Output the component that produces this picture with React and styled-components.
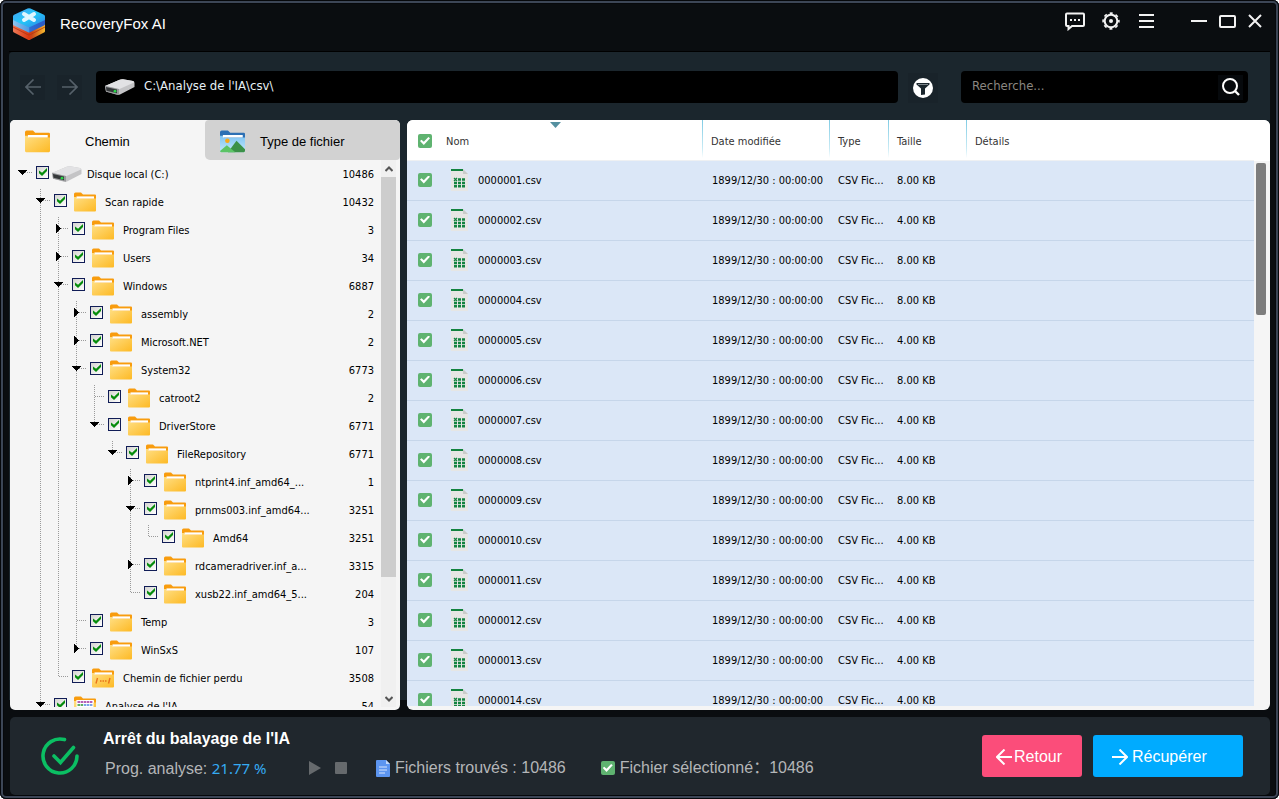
import React from 'react';
import styled, { createGlobalStyle } from "styled-components";

const GlobalStyle = createGlobalStyle`
    * { box-sizing: border-box; }
    body { margin: 0; background: #fff; }
    button, input { font: inherit; margin: 0; }
    svg { display: block; flex: none; }
`;

const ui = `"DejaVu Sans Condensed", "Noto Sans", sans-serif`;
const arial = `"Liberation Sans", Arial, "Noto Sans CJK SC", sans-serif`;

const Window = styled.div`
    display: flex;
    flex-direction: column;
    height: 100vh;
    min-height: 480px;
    padding: 4px 9px;
    border-radius: 6px;
    background: #0a0d10;
    box-shadow: inset 0 0 0 1px #06080b, inset 0 0 0 3px #3c4656, inset 0 0 0 4px #06080b;
    font-family: ${ui};
    font-size: 11px;
    line-height: 16px;
    color: #000;
    overflow: hidden;
`;

/* title bar */

const TitleBar = styled.header`
    display: flex;
    flex: none;
    height: 48px;
    padding: 3px 1px 0 4px;
    border-bottom: 1px solid #000;
`;

const Brand = styled.div`
    display: flex;
    align-items: center;
    flex: 1;
    height: 34px;
`;

const AppName = styled.h1`
    margin: 0 0 0 15px;
    font: 400 15px/20px ${arial};
    color: #fff;
`;

const BarButton = styled.button`
    display: flex;
    align-items: center;
    justify-content: center;
    width: ${(props) => (props.$wide ? "36px" : "28px")};
    height: 28px;
    padding: 0;
    border: 0;
    background: none;
    color: #f2f2f2;
`;

const WindowButtons = styled.div`
    display: flex;
    margin-left: 20px;
`;

/* toolbar */

const Body = styled.main`
    display: flex;
    flex-direction: column;
    flex: 1;
    min-height: 0;
    padding-left: 1px;
    border-radius: 4px 0 0 0;
    background: linear-gradient(#1b262d, #1b262d) no-repeat;
    background-size: 100% calc(100% - 10px);
`;

const Toolbar = styled.div`
    display: flex;
    align-items: center;
    flex: none;
    height: 68px;
    padding: 2px 22px 0 10px;
`;

const NavButtons = styled.div`
    display: flex;
    gap: 12px;
    margin-right: 14px;
`;

const NavButton = styled.button`
    display: flex;
    align-items: center;
    justify-content: center;
    width: 25px;
    height: 25px;
    padding: 0;
    border: 0;
    background: #19232a;
    color: #56616a;
`;

const Field = styled.label`
    display: flex;
    align-items: center;
    gap: 9px;
    flex: ${(props) => (props.$width ? "none" : "1")};
    width: ${(props) => props.$width || "auto"};
    height: 32px;
    padding: 0 5px 0 ${(props) => (props.$width ? "11px" : "9px")};
    border-radius: 4px;
    background: #000;
`;

const TextInput = styled.input`
    flex: 1;
    min-width: 0;
    padding: 0 0 2px;
    border: 0;
    outline: none;
    background: none;
    font: 400 13px/20px ${ui};
    color: #e6f0f6;

    &::placeholder { color: #8b8781; opacity: 1; }
`;

const FilterButton = styled(BarButton)`
    width: 30px;
    height: 30px;
    margin: 2px 23px 0 10px;
    background: #19232a;
`;

const SearchButton = styled(BarButton)`
    width: 25px;
    height: 25px;
    background: #06090c;
`;

const Panels = styled.div`
    display: flex;
    gap: 7px;
    flex: 1;
    min-height: 0;
`;

/* left panel */

const SidePanel = styled.section`
    display: flex;
    flex-direction: column;
    flex: none;
    width: 390px;
    padding-bottom: 3px;
    border-radius: 5px;
    background: #f5f5f5;
    overflow: hidden;
`;

const Tabs = styled.div`
    display: grid;
    grid-template-columns: 1fr 1fr;
    flex: none;
    height: 40px;
`;

const Tab = styled.button`
    display: flex;
    align-items: center;
    gap: ${(props) => (props.$active ? "35px" : "15px")};
    padding: 3px 0 0 15px;
    border: 0;
    border-radius: ${(props) => (props.$active ? "0" : "4px 4px 4px 5px")};
    background: ${(props) => (props.$active ? "#f5f5f5" : "#d2d2d2")};
    font: 400 13px/20px ${arial};
    color: #000;
`;

const TreeArea = styled.div`
    display: flex;
    flex: 1;
    min-height: 0;
    padding-right: 4px;
    overflow: hidden;
`;

const Tree = styled.ul`
    flex: 1;
    margin: 0;
    padding: 0 7px 0 8px;
    list-style: none;
`;

const TreeRow = styled.li`
    display: flex;
    align-items: center;
    height: 28px;
`;

const TreeLabel = styled.label`
    display: flex;
    align-items: center;
    flex: 1;
`;

const Text = styled.span`
    padding-top: 2px;
`;

const TreeIcon = styled.span`
    display: flex;
    justify-content: center;
    width: 30px;
    margin: 0 5px 0 3px;
`;

const TreeCheck = styled.input`
    appearance: none;
    display: block;
    width: 13px;
    height: 13px;
    margin-bottom: 3px;
    border: 1px solid #101c56;
    background: linear-gradient(135deg, #d4d4d0, #fff);

    &:checked::after {
        content: "";
        display: block;
        width: 8px;
        height: 8px;
        margin: 1px 2px;
        background: #068c0c;
        clip-path: polygon(0 30%, 38% 60%, 100% 0, 100% 38%, 38% 100%, 0 66%);
    }
`;

const Scrollbar = styled.div`
    display: flex;
    flex-direction: column;
    flex: none;
    align-items: center;
    justify-content: space-between;
    width: 15px;
    background: #f0f0f0;
`;

const ScrollButton = styled.button`
    display: flex;
    align-items: center;
    justify-content: center;
    width: 15px;
    height: 17px;
    padding: 0;
    border: 0;
    background: none;
    color: #555;
`;

const TreeTrack = styled.div`
    flex: 1;
    width: 15px;
`;

const TreeThumb = styled.div`
    height: 78%;
    background: #cdcdcd;
`;

/* file list */

const FilePanel = styled.section`
    display: flex;
    flex: 1;
    min-width: 0;
    padding-bottom: 4px;
    border-radius: 6px;
    background: #f5f5f5;
    overflow: hidden;
`;

const FileArea = styled.div`
    flex: 1;
    min-width: 0;
    overflow: hidden;
`;

const FileTable = styled.table`
    width: 100%;
    table-layout: fixed;
    border-collapse: separate;
    border-spacing: 0;
`;

const Col = styled.col`
    width: ${(props) => props.$w || "auto"};
`;

const Th = styled.th`
    height: 41px;
    padding: ${(props) => (props.$icon ? "2px" : "4px")} 0 0 ${(props) => props.$pad || "9px"};
    border-bottom: 1px solid #eef0f2;
    background: ${(props) => (props.$line
        ? "linear-gradient(#7fcbe4, #c9ebf5 75%, #fff) no-repeat 0 0 / 1px 38px, #fff"
        : "#fff")};
    text-align: left;
    font-weight: 400;
    color: #333;
`;

const SortMark = styled.svg`
    position: absolute;
    top: 122px;
    left: 550px;
`;

const Td = styled.td`
    height: 40px;
    padding: 0 0 ${(props) => (props.$icon ? "2px" : "0")} ${(props) => props.$pad || "9px"};
    border-bottom: 1px solid #c6d6ea;
    background: #dbe7f7;
    white-space: nowrap;
`;

const FileName = styled.span`
    display: flex;
    align-items: center;
    gap: 10px;
`;

const GreenCheck = styled.input`
    appearance: none;
    display: block;
    flex: none;
    width: 14px;
    height: 14px;
    border-radius: 2px;
    background: #5fb370;

    &:checked::after {
        content: "";
        display: block;
        width: 10px;
        height: 8px;
        margin: 3px 2px;
        background: #fff;
        clip-path: polygon(0 50%, 15% 34%, 38% 60%, 84% 0, 100% 16%, 38% 100%);
    }
`;

const FileScroll = styled.div`
    width: 16px;
    padding: 43px 4px 0 2px;
    background: linear-gradient(#fff, #fff) no-repeat 0 0 / 100% 41px;
`;

const FileThumb = styled.div`
    height: 28%;
    border-radius: 2px;
    background: #7d7d7d;
`;

/* status bar */

const StatusBar = styled.footer`
    display: flex;
    align-items: center;
    flex: none;
    height: 78px;
    margin: 7px 0 0 1px;
    padding: 0 27px 0 31px;
    border-radius: 5px;
    background: #20272d;
    font: 400 16px/20px ${arial};
    color: #b4b6b8;
`;

const StatusText = styled.div`
    flex: 1;
    margin: 0 0 5px 24px;
`;

const StatusTitle = styled.h2`
    margin: 0 0 9px;
    font: 700 16px/20px ${arial};
    color: #fff;
`;

const StatusLine = styled.div`
    display: flex;
    align-items: center;
    padding-left: 2px;
    white-space: nowrap;
`;

const Progress = styled.span`
    width: 204px;
`;

const Percent = styled.span`
    font: 400 15px/20px "Noto Sans", sans-serif;
    color: #35abf3;
`;

const RoundButton = styled.button`
    display: flex;
    width: 12px;
    height: 14px;
    margin-right: 14px;
    padding: 0;
    border: 0;
    background: none;
    color: #666a6d;
`;

const Stat = styled.label`
    display: flex;
    align-items: center;
    gap: 5px;
    margin-left: ${(props) => props.$space || "0"};
`;

const ActionButton = styled.button`
    display: flex;
    align-items: center;
    gap: ${(props) => (props.$wide ? "4px" : "2px")};
    width: ${(props) => (props.$wide ? "150px" : "100px")};
    height: 42px;
    margin-left: 11px;
    padding: 2px 0 0 ${(props) => (props.$wide ? "19px" : "14px")};
    border: 0;
    border-radius: 3px;
    background: ${(props) => props.color};
    color: #fff;
`;

/* drawings */

function Logo() {
  return (
    <svg width="32" height="32" viewBox="0 0 32 32" aria-hidden="true">
        <defs>
            <linearGradient id="top" x1="0" y1="0" x2="1" y2="1">
                <stop offset="0" stopColor="#4a9df2" /><stop offset=".5" stopColor="#22c8f8" /><stop offset="1" stopColor="#2f7fe6" />
            </linearGradient>
            <linearGradient id="mid" x1="0" y1="0" x2="1" y2="0">
                <stop offset="0" stopColor="#8cc4ee" /><stop offset=".5" stopColor="#4c9ae4" /><stop offset=".52" stopColor="#2f6fd6" /><stop offset="1" stopColor="#2a58c4" />
            </linearGradient>
            <linearGradient id="low" x1="0" y1="0" x2="1" y2="0">
                <stop offset="0" stopColor="#ee7a58" /><stop offset=".5" stopColor="#d8370f" /><stop offset=".6" stopColor="#c8481a" /><stop offset="1" stopColor="#f8bb2e" />
            </linearGradient>
        </defs>
        <path d="M0 15 L16 23 L32 15 V23 Q32 24 31 24.500 L17.500 31.500 Q16 32.500 14.500 31.500 L1 24.500 Q0 24 0 23Z" fill="url(#low)" />
        <path d="M0 19 L14.500 26.500 Q16 27.500 17.500 26.500 L32 19" fill="none" stroke="#b8330f" strokeWidth=".8" />
        <path d="M0 8 L16 16 L32 8 V16 Q32 17 31 17.500 L17.500 24 Q16 25 14.500 24 L1 17.500 Q0 17 0 16Z" fill="url(#mid)" />
        <path d="M14.500 .6 Q16 -.2 17.500 .6 L31 6.800 Q32 7.400 32 8.500 V11 Q32 12 31 12.500 L17.500 18.800 Q16 19.600 14.500 18.800 L1 12.500 Q0 12 0 11 V8.500 Q0 7.400 1 6.800Z" fill="url(#top)" />
        <path d="M11 6 L21 12 M21 6 L11 12" stroke="#dff6ff" strokeWidth="4" strokeLinecap="round" />
    </svg>
  );
}

function Arrow({ left, size = 16, weight = 1.6 }) {
  return (
    <svg width={size} height={size} viewBox="0 0 16 16" fill="none" stroke="currentColor" strokeWidth={weight} aria-hidden="true">
        {left ? <path d="M16 8H1 M8.500 .5L1 8L8.500 15.500" /> : <path d="M0 8H15 M7.500 .5L15 8L7.500 15.500" />}
    </svg>
  );
}

function Drive() {
  return (
    <svg width="30" height="16" viewBox="0 0 30 16" aria-hidden="true">
        <path d="M0 7 L14 1 Q16 0 18 .2 L28 2 Q29.500 2.500 29.500 4 V8 L15 15.500 Q13 16 11 15.500 L1 12.500Z" fill="#c4c4c6" />
        <path d="M0 7 L14 1 Q16 0 18 .2 L28 2 Q29.500 2.500 29 3.500 L14 10.200Z" fill="#e2e2e4" />
        <path d="M0 6.800 L14 10 V15.800 L1 12.800Z" fill="#98999b" />
        <path d="M1 8 L12 10.500 V14.300 L1.500 11.800Z" fill="#35383a" />
        <circle cx="10" cy="12.200" r="1.400" fill="#2bd44a" />
    </svg>
  );
}

function Folder({ kind, size = 22 }) {
  return (
    <svg width={size} height={size * 20 / 22} viewBox="0 0 22 20" aria-hidden="true">
        <defs>
            <linearGradient id="fold" x1="0" y1="0" x2="1" y2="1">
                <stop offset="0" stopColor="#ffdf84" /><stop offset="1" stopColor="#fdb924" />
            </linearGradient>
            <linearGradient id="sky" x1="0" y1="0" x2="0" y2="1">
                <stop offset="0" stopColor="#7ec4f3" /><stop offset="1" stopColor="#c3e8fb" />
            </linearGradient>
        </defs>
        <path d="M0 2 Q0 .5 1.500 .5 H7 L9 2.500 H21 Q22 2.500 22 3.500 V12 H0Z" fill={kind === "image" ? "#2d70b4" : "#f89c0e"} />
        <path d="M0 5 H2 L3.500 6.500 H22 V18.500 Q22 19.500 21 19.500 H1 Q0 19.500 0 18.500Z" fill={kind === "image" ? "url(#sky)" : "url(#fold)"} />
        <rect x="2.500" y="4.400" width="17.500" height="2.200" fill="#fff" />
        {kind === "image" && (
            <>
                <circle cx="6.500" cy="9.500" r="2" fill="#f8a71a" />
                <path d="M7 19.500 L14.500 9.500 L22 17 V18.500 Q22 19.500 21 19.500Z" fill="#3b9148" />
                <path d="M0 18.500 L6 13.500 L13.500 19.500 H1 Q0 19.500 0 18.500Z" fill="#5cc466" />
            </>
        )}
        {kind === "lost" && (
            <path d="M4 15.500 L5.500 10 M16.500 15.500 L18 10 M8 13 H9.500 M10.500 13 H12 M13 13 H14.500" stroke="#e8731c" strokeWidth="1.400" />
        )}
        {kind === "ai" && (
            <>
                <rect x="2.500" y="4" width="17" height="16" fill="#fff" />
                <path d="M3.500 6 H18.500" stroke="#b65fb5" strokeWidth="2" strokeDasharray="2.500 .6" />
                <path d="M3.500 9 H9" stroke="#5fae62" strokeWidth="2" strokeDasharray="2.500 .6" />
                <path d="M9.700 9 H18.500" stroke="#7aa3e8" strokeWidth="2" strokeDasharray="2.500 .6" />
            </>
        )}
    </svg>
  );
}

function CsvIcon() {
  return (
    <svg width="17" height="22" viewBox="0 0 17 22" aria-hidden="true">
        <path d="M0 0 H12 L17 5 V22 H0Z" fill="#e6e6e4" />
        <path d="M12 0 L17 5 H12Z" fill="#c9cbc9" />
        <rect width="12" height="2" fill="#12833f" />
        <path d="M3 9 L6 12 M6 9 L3 12" stroke="#12833f" strokeWidth="1.200" />
        <path d="M7 10.500 H14 M3 14 H14 M3 17.300 H14" stroke="#12833f" strokeWidth="2.400" strokeDasharray="3 1" />
    </svg>
  );
}

// one 18px step of the tree, with its dotted lines and the arrow
function Branch({ up, down, side, arrow }) {
  return (
    <svg width="18" height="28" viewBox="0 0 18 28" shapeRendering="crispEdges" aria-hidden="true">
        {up && <path d="M4.500 1V12" stroke="#9a9a9a" strokeDasharray="1 1" />}
        {down && <path d="M4.500 13V28" stroke="#9a9a9a" strokeDasharray="1 1" />}
        {side && <path d="M5 12.500H14" stroke="#9a9a9a" strokeDasharray="1 1" />}
        {arrow === "open" && <path d="M0 10H9L4.500 15Z" fill="#000" />}
        {arrow === "closed" && <path d="M2 8V17L7 12.500Z" fill="#000" />}
    </svg>
  );
}

function Chevron({ down }) {
  return (
    <svg width="8" height="6" viewBox="0 0 8 6" fill="none" stroke="currentColor" strokeWidth="2" aria-hidden="true">
        <path d={down ? "M.5 1L4 4.500L7.500 1" : "M.5 5L4 1.500L7.500 5"} />
    </svg>
  );
}

const treeData = [
    { level: 0, arrow: "open", name: "Disque local (C:)", count: 10486, kind: "drive" },
    { level: 1, arrow: "open", name: "Scan rapide", count: 10432 },
    { level: 2, arrow: "closed", name: "Program Files", count: 3 },
    { level: 2, arrow: "closed", name: "Users", count: 34 },
    { level: 2, arrow: "open", name: "Windows", count: 6887 },
    { level: 3, arrow: "closed", name: "assembly", count: 2 },
    { level: 3, arrow: "closed", name: "Microsoft.NET", count: 2 },
    { level: 3, arrow: "open", name: "System32", count: 6773 },
    { level: 4, name: "catroot2", count: 2 },
    { level: 4, arrow: "open", name: "DriverStore", count: 6771 },
    { level: 5, arrow: "open", name: "FileRepository", count: 6771 },
    { level: 6, arrow: "closed", name: "ntprint4.inf_amd64_...", count: 1 },
    { level: 6, arrow: "open", name: "prnms003.inf_amd64...", count: 3251 },
    { level: 7, name: "Amd64", count: 3251 },
    { level: 6, arrow: "closed", name: "rdcameradriver.inf_a...", count: 3315 },
    { level: 6, name: "xusb22.inf_amd64_5...", count: 204 },
    { level: 3, name: "Temp", count: 3 },
    { level: 3, arrow: "closed", name: "WinSxS", count: 107 },
    { level: 2, name: "Chemin de fichier perdu", count: 3508, kind: "lost" },
    { level: 1, arrow: "open", name: "Analyse de l'IA", count: 54, kind: "ai" },
];

const sizes = [8, 4, 8, 8, 4, 8, 4, 4, 8, 4, 4, 4, 4, 4];

// is there another node of this level further down, under the same parent
function goesOn(index, level) {
    const next = treeData.slice(index + 1).find((node) => node.level <= level);
    return Boolean(next) && next.level === level;
}

function FileTree() {
  return (
    <Tree>
        {treeData.map((node, i) => (
            <TreeRow key={node.name}>
                {Array.from({ length: node.level }, (_, k) => (
                    <Branch key={k} up={k > 0 && goesOn(i, k)} down={k > 0 && goesOn(i, k)} />
                ))}
                <Branch up={node.level > 0} down={node.level > 0 && goesOn(i, node.level)} side arrow={node.arrow} />
                <TreeLabel>
                    <TreeCheck type="checkbox" defaultChecked />
                    <TreeIcon>{node.kind === "drive" ? <Drive /> : <Folder kind={node.kind} />}</TreeIcon>
                    <Text>{node.name}</Text>
                </TreeLabel>
                <Text>{node.count}</Text>
            </TreeRow>
        ))}
    </Tree>
  );
}

function FileList() {
  return (
    <FileTable>
        <colgroup>
            <Col $w="38px" />
            <Col $w="257px" />
            <Col $w="127px" />
            <Col $w="59px" />
            <Col $w="78px" />
            <Col />
        </colgroup>
        <thead>
            <tr>
                <Th $icon $pad="11px"><GreenCheck type="checkbox" defaultChecked aria-label="Tout" /></Th>
                <Th $pad="1px">Nom</Th>
                <Th $line>Date modifiée</Th>
                <Th $line>Type</Th>
                <Th $line>Taille</Th>
                <Th $line>Détails</Th>
            </tr>
        </thead>
        <tbody>
            {sizes.map((size, i) => {
                const name = String(i + 1).padStart(7, "0") + ".csv";
                return (
                    <tr key={name}>
                        <Td $icon $pad="11px"><GreenCheck type="checkbox" defaultChecked aria-label={name} /></Td>
                        <Td $icon $pad="6px"><FileName><CsvIcon /><Text>{name}</Text></FileName></Td>
                        <Td $pad="10px">1899/12/30 : 00:00:00</Td>
                        <Td>CSV Fic...</Td>
                        <Td>{size}.00 KB</Td>
                        <Td />
                    </tr>
                );
            })}
        </tbody>
    </FileTable>
  );
}

function App() {
  return (
    <Window>
        <GlobalStyle />
        <TitleBar>
            <Brand>
                <Logo />
                <AppName>RecoveryFox AI</AppName>
            </Brand>
            <BarButton $wide aria-label="Messages">
                <svg width="20" height="19" viewBox="0 0 20 19" fill="none" stroke="currentColor" strokeWidth="2">
                    <path d="M2 1.500H18Q19 1.500 19 2.500V13Q19 14 18 14H7L3.500 17V14H2Q1 14 1 13V2.500Q1 1.500 2 1.500Z" />
                    <path d="M5 8H7M9 8H11M13 8H15" />
                </svg>
            </BarButton>
            <BarButton $wide aria-label="Options">
                <svg width="18" height="18" viewBox="0 0 18 18" fill="none" stroke="currentColor">
                    <circle cx="9" cy="9" r="6.300" strokeWidth="2" />
                    <circle cx="9" cy="9" r="7.900" strokeWidth="1.600" strokeDasharray="3.100 3.100" strokeDashoffset="1.550" />
                    <circle cx="9" cy="9" r="2" fill="currentColor" stroke="none" />
                </svg>
            </BarButton>
            <BarButton $wide aria-label="Menu">
                <svg width="16" height="16" viewBox="0 0 16 16" stroke="currentColor" strokeWidth="2">
                    <path d="M0 2H15M0 8H15M0 14H15" />
                </svg>
            </BarButton>
            <WindowButtons>
                <BarButton aria-label="Réduire">
                    <svg width="16" height="16" viewBox="0 0 16 16" stroke="currentColor" strokeWidth="2"><path d="M0 8H16" /></svg>
                </BarButton>
                <BarButton aria-label="Agrandir">
                    <svg width="17" height="13" viewBox="0 0 17 13" fill="none" stroke="currentColor" strokeWidth="2"><rect x="1" y="1" width="15" height="11" rx="1" /></svg>
                </BarButton>
                <BarButton aria-label="Fermer">
                    <svg width="14" height="14" viewBox="0 0 14 14" stroke="currentColor" strokeWidth="2"><path d="M1 1L13 13M13 1L1 13" /></svg>
                </BarButton>
            </WindowButtons>
        </TitleBar>

        <Body>
            <Toolbar>
                <NavButtons>
                    <NavButton aria-label="Précédent"><Arrow left /></NavButton>
                    <NavButton aria-label="Suivant"><Arrow /></NavButton>
                </NavButtons>
                <Field>
                    <Drive />
                    <TextInput type="text" aria-label="Chemin" defaultValue={"C:\\Analyse de l'IA\\csv\\"} />
                </Field>
                <FilterButton aria-label="Filtrer">
                    <svg width="20" height="20" viewBox="0 0 20 20">
                        <circle cx="10" cy="10" r="10" fill="#fff" />
                        <path d="M3.500 5H16.500V6.500L12 10.500V16.500L8 17V10.500L3.500 6.500Z" fill="#1b262d" />
                        <path d="M5 6.500H15" stroke="#7d868b" />
                    </svg>
                </FilterButton>
                <Field $width="287px">
                    <TextInput type="text" aria-label="Recherche" placeholder="Recherche..." />
                    <SearchButton aria-label="Rechercher">
                        <svg width="18" height="18" viewBox="0 0 18 18" fill="none" stroke="#fff" strokeWidth="2">
                            <circle cx="8" cy="8" r="7" />
                            <path d="M13 13L17 17" strokeWidth="2.400" />
                        </svg>
                    </SearchButton>
                </Field>
            </Toolbar>

            <Panels>
                <SidePanel>
                    <Tabs>
                        <Tab $active><Folder size={25} />Chemin</Tab>
                        <Tab><Folder kind="image" size={25} />Type de fichier</Tab>
                    </Tabs>
                    <TreeArea>
                        <FileTree />
                        <Scrollbar>
                            <ScrollButton aria-label="Haut"><Chevron /></ScrollButton>
                            <TreeTrack><TreeThumb /></TreeTrack>
                            <ScrollButton aria-label="Bas"><Chevron down /></ScrollButton>
                        </Scrollbar>
                    </TreeArea>
                </SidePanel>
                <FilePanel>
                    <FileArea><FileList /></FileArea>
                    <FileScroll><FileThumb /></FileScroll>
                </FilePanel>
                <SortMark width="11" height="6" viewBox="0 0 11 6" aria-hidden="true"><path d="M0 0H11L5.500 6Z" fill="#5590a0" /></SortMark>
            </Panels>
        </Body>

        <StatusBar>
            <svg width="38" height="38" viewBox="0 0 38 38" fill="none" stroke="#0bbf63" strokeWidth="3.600" strokeLinecap="round">
                <path d="M23.500 2.600A17 17 0 1 0 36 19" />
                <path d="M13 19L19.500 25.500L32.500 10.500" />
            </svg>
            <StatusText>
                <StatusTitle>Arrêt du balayage de l'IA</StatusTitle>
                <StatusLine>
                    <Progress>Prog. analyse: <Percent>21.77 %</Percent></Progress>
                    <RoundButton aria-label="Lancer">
                        <svg width="12" height="14" viewBox="0 0 12 14"><path d="M0 0L12 7L0 14Z" fill="currentColor" /></svg>
                    </RoundButton>
                    <RoundButton aria-label="Arrêter">
                        <svg width="12" height="14" viewBox="0 0 12 14"><rect y="1" width="12" height="12" rx="1" fill="currentColor" /></svg>
                    </RoundButton>
                    <Stat $space="15px">
                        <svg width="14" height="17" viewBox="0 0 14 17">
                            <path d="M0 1Q0 0 1 0H10L14 4V16Q14 17 13 17H1Q0 17 0 16Z" fill="#5c95f0" />
                            <path d="M10 0L14 4H10Z" fill="#c3d9fb" />
                            <path d="M3 7H11M3 10H11M3 13H9" stroke="#d7e5fd" />
                        </svg>
                        Fichiers trouvés : 10486
                    </Stat>
                    <Stat $space="35px">
                        <GreenCheck type="checkbox" defaultChecked />
                        Fichier sélectionné：10486
                    </Stat>
                </StatusLine>
            </StatusText>
            <ActionButton color="#fb4d7a"><Arrow left weight={2} />Retour</ActionButton>
            <ActionButton color="#00abff" $wide><Arrow weight={2} />Récupérer</ActionButton>
        </StatusBar>
    </Window>
  );
}

export default App;
